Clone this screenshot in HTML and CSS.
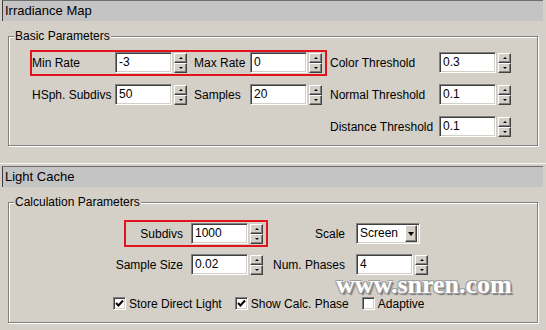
FILE: index.html
```html
<!DOCTYPE html>
<html lang="en">
<head>
  <meta charset="UTF-8">
  <meta name="viewport" content="width=device-width, initial-scale=1.0">
  <title>Irradiance Map / Light Cache</title>
  <link rel="stylesheet" href="styles.css">
</head>
<body>
  <section class="rollout">
    <div class="rollout-head">Irradiance Map</div>
    <div class="rollout-body">
      <fieldset class="group group-basic">
        <legend>Basic Parameters</legend>
        <div class="basic-grid">
          <div class="hl hl-rates">
            <div class="field">
              <span class="lbl c1">Min Rate</span>
              <span class="num">-3</span>
              <span class="spin"><span class="btn up"></span><span class="btn down"></span></span>
            </div>
            <div class="field">
              <span class="lbl c2">Max Rate</span>
              <span class="num">0</span>
              <span class="spin"><span class="btn up"></span><span class="btn down"></span></span>
            </div>
          </div>
          <div class="field">
            <span class="lbl c3">Color Threshold</span>
            <span class="num">0.3</span>
            <span class="spin"><span class="btn up"></span><span class="btn down"></span></span>
          </div>

          <div class="field">
            <span class="lbl c1">HSph. Subdivs</span>
            <span class="num">50</span>
            <span class="spin"><span class="btn up"></span><span class="btn down"></span></span>
          </div>
          <div class="field">
            <span class="lbl c2">Samples</span>
            <span class="num">20</span>
            <span class="spin"><span class="btn up"></span><span class="btn down"></span></span>
          </div>
          <div class="field">
            <span class="lbl c3">Normal Threshold</span>
            <span class="num">0.1</span>
            <span class="spin"><span class="btn up"></span><span class="btn down"></span></span>
          </div>

          <div class="field col3">
            <span class="lbl c3">Distance Threshold</span>
            <span class="num">0.1</span>
            <span class="spin"><span class="btn up"></span><span class="btn down"></span></span>
          </div>
        </div>
      </fieldset>
    </div>
  </section>

  <section class="rollout">
    <div class="rollout-head">Light Cache</div>
    <div class="rollout-body">
      <fieldset class="group group-calc">
        <legend>Calculation Parameters</legend>
        <div class="row row-subdivs">
          <div class="field hl hl-subdivs">
            <span class="lbl lbl-r w57">Subdivs</span>
            <span class="num">1000</span>
            <span class="spin"><span class="btn up"></span><span class="btn down"></span></span>
          </div>
          <div class="field">
            <span class="lbl lbl-r2">Scale</span>
            <span class="select">Screen<span class="drop"></span></span>
          </div>
        </div>
        <div class="row">
          <div class="field">
            <span class="lbl lbl-r w174">Sample Size</span>
            <span class="num">0.02</span>
            <span class="spin"><span class="btn up"></span><span class="btn down"></span></span>
          </div>
          <div class="field">
            <span class="lbl lbl-r2">Num. Phases</span>
            <span class="num">4</span>
            <span class="spin"><span class="btn up"></span><span class="btn down"></span></span>
          </div>
        </div>
        <div class="row row-checks">
          <label class="check">
            <span class="ck"><svg width="9" height="9" viewBox="0 0 9 9"><polyline points="1,4 3.5,6.5 8,1.5" fill="none" stroke="#000" stroke-width="2"/></svg></span>
            Store Direct Light
          </label>
          <label class="check">
            <span class="ck"><svg width="9" height="9" viewBox="0 0 9 9"><polyline points="1,4 3.5,6.5 8,1.5" fill="none" stroke="#000" stroke-width="2"/></svg></span>
            Show Calc. Phase
          </label>
          <label class="check">
            <span class="ck"></span>
            Adaptive
          </label>
        </div>
      </fieldset>
    </div>
  </section>

  <div class="watermark">www.snren.com</div>
</body>
</html>
```

FILE: styles.css
```css
* {
  box-sizing: border-box;
}

body {
  position: relative;
  width: 546px;
  height: 330px;
  margin: 0;
  overflow: hidden;
  background-color: #d4d0c8;
  font-family: "Liberation Sans", Arial, sans-serif;
  font-size: 12px;
  color: #000;
}

/* rollouts */

.rollout + .rollout {
  margin-top: 13px;
  border-top: 1px solid #f4f4f4;
  padding-top: 2px;
}

.rollout-head {
  height: 21px;
  margin: 0 3px 0 2px;
  padding-left: 2px;
  border-top: 1px solid #6e6e6e;
  border-left: 1px solid #404040;
  background-color: #c4c4c4;
  font-size: 13px;
  line-height: 20px;
}

.rollout-body {
  padding: 8px 0 4px;
}

/* group boxes */

.group {
  min-width: 0;
  margin: 0 8px;
  padding: 9px 0 8px;
  border: 1px solid #808080;
  box-shadow: inset 1px 1px #fff, 1px 1px #fff;
}

.group legend {
  margin-left: 5px;
  padding: 0 1px;
  line-height: 14px;
  background-color: #d4d0c8;
}

.group-calc {
  padding-top: 14px;
}

.basic-grid {
  display: grid;
  grid-template-columns: 162px 136px auto;
  row-gap: 11px;
  margin-left: 23px;
}

.col3 {
  grid-column: 3;
}

.row {
  display: flex;
  height: 21px;
  margin-bottom: 10px;
}

.row-subdivs {
  padding-left: 117px;
}

.row-checks {
  gap: 13px;
  margin: 18px 0 0;
  padding-left: 104px;
  align-items: center;
}

/* fields */

.field {
  display: flex;
  align-items: center;
  height: 21px;
}

.lbl {
  flex: none;
  white-space: nowrap;
}

.c1 { width: 83px; }
.c2 { width: 56px; }
.c3 { width: 109px; }

.lbl-r {
  margin-right: 8px;
  text-align: right;
}

.w57 { width: 57px; }
.w174 { width: 174px; }

.lbl-r2 {
  width: 82px;
  margin-right: 11px;
  text-align: right;
}

.num,
.select {
  height: 21px;
  background-color: #fff;
  border: 1px solid;
  border-color: #808080 #fff #fff #808080;
  box-shadow: inset 1px 1px #404040, inset -1px -1px #d4d0c8;
  line-height: 19px;
}

.num {
  width: 57px;
  padding: 0 3px;
}

.spin {
  display: flex;
  flex-direction: column;
  align-self: flex-end;
  width: 13px;
  height: 20px;
  margin-left: 2px;
}

.btn,
.drop {
  display: flex;
  align-items: center;
  justify-content: center;
  background-color: #d4d0c8;
  border: 1px solid;
  border-color: #fff #404040 #404040 #fff;
  box-shadow: inset -1px -1px #808080;
}

.btn {
  height: 10px;
}

.btn::before,
.drop::before {
  content: "";
  border-left: 2px solid transparent;
  border-right: 2px solid transparent;
}

.up::before { border-bottom: 2px solid #000; }
.down::before { border-top: 2px solid #000; }

.select {
  display: flex;
  align-items: center;
  justify-content: space-between;
  width: 64px;
  padding: 0 2px 0 3px;
}

.drop {
  width: 12px;
  height: 17px;
}

.drop::before {
  border-left-width: 3px;
  border-right-width: 3px;
  border-top: 4px solid #000;
}

/* red annotation boxes */

.hl {
  position: relative;
}

.hl::after {
  content: "";
  position: absolute;
  pointer-events: none;
  border: 2px solid #e0141c;
}

.hl-rates {
  display: grid;
  grid-column: 1 / 3;
  grid-template-columns: 162px auto;
}

.hl-rates::after {
  top: -2px;
  right: 3px;
  bottom: -3px;
  left: -2px;
}

.hl-subdivs::after {
  top: -3px;
  right: -5px;
  bottom: -3px;
  left: -2px;
}

/* checkboxes */

.check {
  display: flex;
  align-items: center;
  gap: 3px;
  white-space: nowrap;
}

.ck {
  display: flex;
  align-items: center;
  justify-content: center;
  width: 13px;
  height: 13px;
  background-color: #fff;
  border: 1px solid;
  border-color: #808080 #fff #fff #808080;
  box-shadow: inset 1px 1px #404040, inset -1px -1px #d4d0c8;
}

/* watermark over the panel */

.watermark {
  position: absolute;
  left: 336px;
  top: 277px;
  font-family: "Liberation Serif", serif;
  font-size: 26px;
  font-weight: bold;
  line-height: 16px;
  color: #fff;
  text-shadow:
    -1px -1px 0 #a0a0a0,
    1px -1px 0 #a0a0a0,
    -1px 1px 0 #a0a0a0,
    1px 1px 0 #8c8c8c,
    2px 2px 1px #777;
}
```
